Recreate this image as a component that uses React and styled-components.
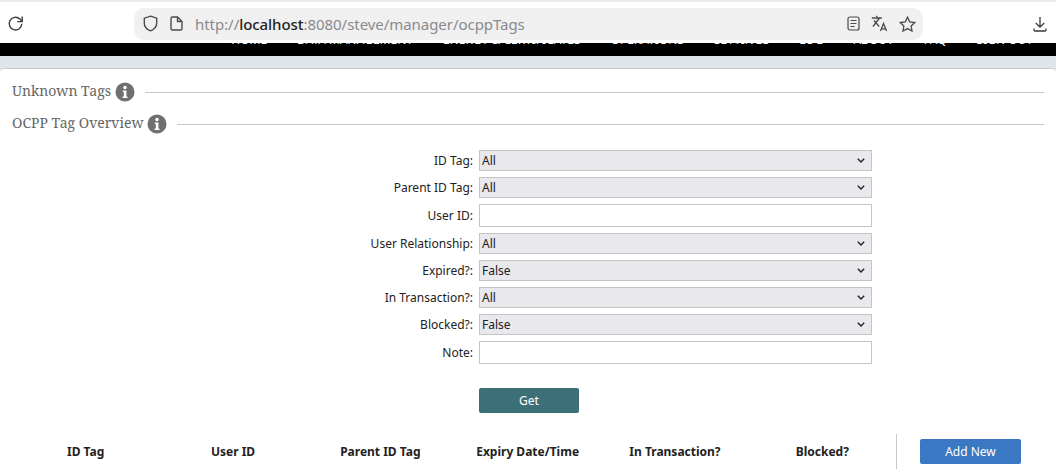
import React from 'react';
import styled, { createGlobalStyle } from 'styled-components';

const GlobalStyle = createGlobalStyle`
  html, body {
    margin: 0;
    padding: 0;
    height: 469px;
    overflow: hidden;
    background: #fff;
    font-family: "Noto Sans", sans-serif;
  }
  * { box-sizing: border-box; }
`;

// Browser chrome

const BrowserBar = styled.div`
  display: flex;
  align-items: center;
  height: 43px;
  padding: 2px 6px 0 5px;
  background: #fff;
  border-top: 2px solid #ebebeb;
`;

const IconSlot = styled.span`
  display: flex;
  align-items: center;
  justify-content: center;
  width: ${(props) => props.size || 20}px;
  height: 20px;
  color: #4a4a4f;
`;

const UrlBar = styled.div`
  display: flex;
  align-items: center;
  gap: 9px;
  width: 789px;
  height: 32px;
  margin-left: 109px;
  padding: 0 6px;
  border-radius: 10px;
  background: #f0f0f0;
`;

const UrlText = styled.span`
  flex: 1;
  margin-left: 3px;
  font-family: "Noto Sans", sans-serif;
  font-size: 15px;
  letter-spacing: -0.05px;
  color: #8a8a8e;
  b { font-weight: 500; color: #222; }
`;

const DownloadSlot = styled(IconSlot)`
  margin-left: auto;
`;

// Site header, scrolled so only the bottom of the nav shows

const NavBand = styled.div`
  display: flex;
  justify-content: flex-end;
  gap: 30px;
  height: 13px;
  padding-right: 23px;
  overflow: hidden;
  background: #000;
`;

const NavLink = styled.span`
  margin-top: -10px;
  font-size: 12px;
  line-height: 14px;
  color: #fff;
  white-space: nowrap;
`;

const Page = styled.div`
  height: 413px;
  padding-top: 12px;
  background: #e0e5e9;
`;

const Panel = styled.main`
  height: 401px;
  padding: 0 12px;
  background: #fff;
  border-top: 1px solid #c9c9c9;
  border-radius: 4px 4px 0 0;
  overflow: hidden;
`;

const SectionTitle = styled.div`
  display: flex;
  align-items: center;
  height: 32px;
  margin-top: ${(props) => props.first ? 7 : 0}px;
  font-family: "Noto Serif", "DejaVu Serif", serif;
  font-size: 14px;
  color: #666;
  &::after {
    content: "";
    flex: 1;
    height: 1px;
    margin-left: 10px;
    background: #c8c8c8;
  }
`;

const TitleText = styled.span`
  margin-bottom: 4px;
`;

const InfoIcon = styled.svg`
  width: 20px;
  height: 20px;
  margin-left: 4px;
`;

const FilterForm = styled.form`
  display: grid;
  grid-template-columns: 461px 393px;
  column-gap: 6px;
  margin-top: 7px;
  font-size: 12px;
  color: #222;
`;

const FieldLabel = styled.label`
  display: flex;
  align-items: center;
  justify-content: flex-end;
  height: ${(props) => props.tall ? 29 : 27}px;
`;

const FieldCell = styled.div`
  display: flex;
  align-items: center;
  height: ${(props) => props.tall ? 29 : 27}px;
`;

const FakeSelect = styled.div`
  display: flex;
  align-items: center;
  justify-content: space-between;
  width: 393px;
  height: 21px;
  padding: 0 6px 0 2px;
  background: #e8e8ed;
  border: 1px solid #c5c5c5;
  color: #222;
`;

const TextField = styled.div`
  width: 393px;
  height: 23px;
  background: #fff;
  border: 1px solid #c5c5c5;
`;

const ButtonRow = styled.div`
  padding: 21px 0 0 467px;
`;

const Button = styled.button`
  width: ${(props) => props.wide || 100}px;
  height: 25px;
  padding: 0;
  border: 0;
  border-radius: 2px;
  font-family: "Noto Sans", sans-serif;
  font-size: 12px;
  color: #fff;
  background: ${(props) => props.color};
`;

const ResultHeader = styled.div`
  display: grid;
  grid-template-columns: repeat(6, 147.33px) 1fr;
  align-items: center;
  margin-top: 21px;
  font-size: 12px;
  font-weight: 700;
  color: #222;
`;

const HeaderCell = styled.div`
  text-align: center;
`;

const ActionCell = styled.div`
  display: flex;
  justify-content: center;
  align-items: center;
  height: 35px;
  border-left: 1px solid #c8c8c8;
`;

function Info() {
  return (
    <InfoIcon viewBox="0 0 20 20">
      <circle cx="10" cy="10" r="9.5" fill="#707070" />
      <circle cx="10" cy="5.5" r="1.7" fill="#fff" />
      <path d="M7.8 8.4h3.6v6h1.1v1.6H7.6v-1.6h1.2V10H7.8z" fill="#fff" />
    </InfoIcon>
  );
}

function Chevron() {
  return (
    <svg width="8" height="5" viewBox="0 0 8 5">
      <path d="M.8.8L4 4 7.200.8" fill="none" stroke="#222" strokeWidth="1.400" />
    </svg>
  );
}

const navItems = ['HOME', 'DATA MANAGEMENT', 'ENERGY & CERTIFICATES', 'OPERATIONS', 'SETTINGS', 'LOG', 'ABOUT', 'FAQ', 'SIGN OUT'];

const fields = [
  { label: 'ID Tag:', value: 'All' },
  { label: 'Parent ID Tag:', value: 'All' },
  { label: 'User ID:', tall: true },
  { label: 'User Relationship:', value: 'All' },
  { label: 'Expired?:', value: 'False' },
  { label: 'In Transaction?:', value: 'All' },
  { label: 'Blocked?:', value: 'False' },
  { label: 'Note:', tall: true },
];

const columns = ['ID Tag', 'User ID', 'Parent ID Tag', 'Expiry Date/Time', 'In Transaction?', 'Blocked?'];

function App() {
  return (
    <>
      <GlobalStyle />
      <BrowserBar>
        <IconSlot>
          <svg width="17" height="17" viewBox="0 0 17 17" fill="none" stroke="#3d3d40" strokeWidth="1.400">
            <path d="M14.800 8.800A6.300 6.300 0 1 1 12.900 4.100L14.800 6" />
            <path d="M15.200 1.600v5h-5" />
          </svg>
        </IconSlot>
        <UrlBar>
          <IconSlot>
            <svg width="15" height="17" viewBox="0 0 15 17" fill="none" stroke="#4a4a4f" strokeWidth="1.400">
              <path d="M7.500 1.200l6.200 2v5c0 3.600-2.600 6.200-6.200 7.600-3.600-1.400-6.200-4-6.200-7.600v-5z" />
            </svg>
          </IconSlot>
          <IconSlot size={14}>
            <svg width="13" height="15" viewBox="0 0 13 15" fill="none" stroke="#4a4a4f" strokeWidth="1.400">
              <path d="M2.500 1h5l4.500 4.500v7a1.500 1.500 0 0 1-1.500 1.500h-8A1.500 1.500 0 0 1 1 12.500v-10A1.500 1.500 0 0 1 2.500 1z" />
              <path d="M7.500 1v4.500H12" />
            </svg>
          </IconSlot>
          <UrlText>http://<b>localhost</b>:8080/steve/manager/ocppTags</UrlText>
          <IconSlot size={16}>
            <svg width="13" height="15" viewBox="0 0 13 15" fill="none" stroke="#4a4a4f" strokeWidth="1.200">
              <rect x="1" y="1" width="11" height="13" rx="2" />
              <path d="M3.500 4.500h6M3.500 7.500h6M3.500 10.500h4" />
            </svg>
          </IconSlot>
          <IconSlot size={18}>
            <svg width="17" height="17" viewBox="0 0 17 17" fill="none" stroke="#4a4a4f" strokeWidth="1.300">
              <path d="M.8 3h10M5.800 .8V3M2 11.500L8.500 3M3 5.500l5.200 6" />
              <path d="M9.500 16l3-7.500 3 7.500M10.500 13.800h4" />
            </svg>
          </IconSlot>
          <IconSlot>
            <svg width="17" height="16" viewBox="0 0 17 16" fill="none" stroke="#4a4a4f" strokeWidth="1.300">
              <path d="M8.500 1.200l2.200 4.600 5 .7-3.600 3.500.9 5-4.500-2.400L4 15l.9-5L1.300 6.500l5-.7z" />
            </svg>
          </IconSlot>
        </UrlBar>
        <DownloadSlot>
          <svg width="14" height="16" viewBox="0 0 14 16" fill="none" stroke="#3d3d40" strokeWidth="1.300">
            <path d="M7 1v10M2.800 7L7 11.200 11.200 7M1 12.500v1.500a1 1 0 0 0 1 1h10a1 1 0 0 0 1-1v-1.500" />
          </svg>
        </DownloadSlot>
      </BrowserBar>
      <NavBand>
        {navItems.map((item) => (
          <NavLink key={item}>{item}</NavLink>
        ))}
      </NavBand>
      <Page>
        <Panel>
          <SectionTitle first><TitleText>Unknown Tags</TitleText><Info /></SectionTitle>
          <SectionTitle><TitleText>OCPP Tag Overview</TitleText><Info /></SectionTitle>
          <FilterForm>
            {fields.map((field) => (
              <React.Fragment key={field.label}>
                <FieldLabel tall={field.tall}>{field.label}</FieldLabel>
                <FieldCell tall={field.tall}>
                  {field.value ? (
                    <FakeSelect>{field.value}<Chevron /></FakeSelect>
                  ) : (
                    <TextField />
                  )}
                </FieldCell>
              </React.Fragment>
            ))}
          </FilterForm>
          <ButtonRow>
            <Button type="button" color="#3c6f78">Get</Button>
          </ButtonRow>
          <ResultHeader>
            {columns.map((column) => (
              <HeaderCell key={column}>{column}</HeaderCell>
            ))}
            <ActionCell>
              <Button type="button" color="#3a78c3" wide={101}>Add New</Button>
            </ActionCell>
          </ResultHeader>
        </Panel>
      </Page>
    </>
  );
}

export default App;
